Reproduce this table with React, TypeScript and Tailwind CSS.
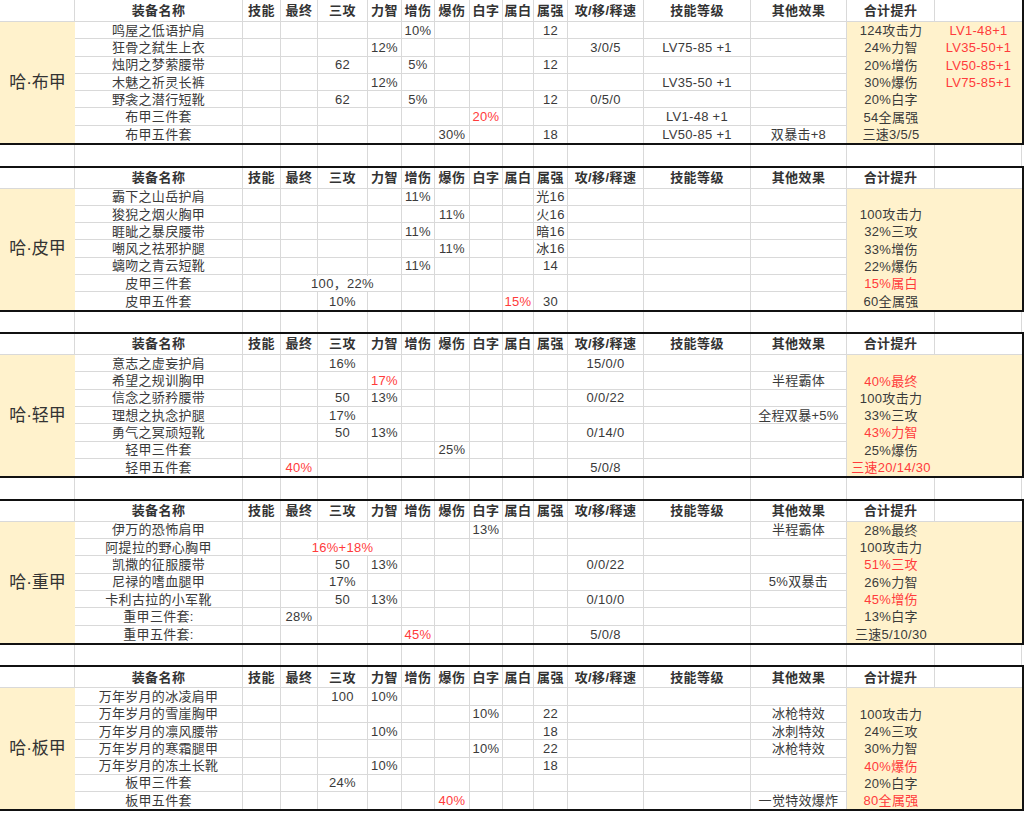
import React from "react";

const COLS =
  "grid-cols-[75px_168px_38px_37px_50px_34px_33px_35px_33px_31px_34px_76px_107px_96px_88px_87px]";

const HEADERS = [
  "装备名称",
  "技能",
  "最终",
  "三攻",
  "力智",
  "增伤",
  "爆伤",
  "白字",
  "属白",
  "属强",
  "攻/移/释速",
  "技能等级",
  "其他效果",
  "合计提升",
  "",
];

type Row = { name: string; c: Record<number, string> };

const r = (name: string, c: Record<number, string>): Row => ({ name, c });

// 1 技能, 2 最终, 3 三攻, 4 力智, 5 增伤, 6 爆伤, 7 白字, 8 属白, 9 属强,
// 10 攻/移/释速, 11 技能等级, 12 其他效果, 13 合计提升, 14 extra. "!" = red
const BLOCKS: { title: string; rows: Row[] }[] = [
  {
    title: "哈·布甲",
    rows: [
      r("鸣屋之低语护肩", { 5: "10%", 9: "12", 13: "124攻击力", 14: "!LV1-48+1" }),
      r("狂骨之弑生上衣", { 4: "12%", 10: "3/0/5", 11: "LV75-85 +1", 13: "24%力智", 14: "!LV35-50+1" }),
      r("烛阴之梦萦腰带", { 3: "62", 5: "5%", 9: "12", 13: "20%增伤", 14: "!LV50-85+1" }),
      r("木魅之祈灵长裤", { 4: "12%", 11: "LV35-50 +1", 13: "30%爆伤", 14: "!LV75-85+1" }),
      r("野衾之潜行短靴", { 3: "62", 5: "5%", 9: "12", 10: "0/5/0", 13: "20%白字" }),
      r("布甲三件套", { 7: "!20%", 11: "LV1-48 +1", 13: "54全属强" }),
      r("布甲五件套", { 6: "30%", 9: "18", 11: "LV50-85 +1", 12: "双暴击+8", 13: "三速3/5/5" }),
    ],
  },
  {
    title: "哈·皮甲",
    rows: [
      r("霸下之山岳护肩", { 5: "11%", 9: "光16" }),
      r("狻猊之烟火胸甲", { 6: "11%", 9: "火16", 13: "100攻击力" }),
      r("睚眦之暴戾腰带", { 5: "11%", 9: "暗16", 13: "32%三攻" }),
      r("嘲风之祛邪护腿", { 6: "11%", 9: "冰16", 13: "33%增伤" }),
      r("螭吻之青云短靴", { 5: "11%", 9: "14", 13: "22%爆伤" }),
      r("皮甲三件套", { 3: "100，22%", 13: "!15%属白" }),
      r("皮甲五件套", { 3: "10%", 8: "!15%", 9: "30", 13: "60全属强" }),
    ],
  },
  {
    title: "哈·轻甲",
    rows: [
      r("意志之虚妄护肩", { 3: "16%", 10: "15/0/0" }),
      r("希望之规训胸甲", { 4: "!17%", 12: "半程霸体", 13: "!40%最终" }),
      r("信念之骄矜腰带", { 3: "50", 4: "13%", 10: "0/0/22", 13: "100攻击力" }),
      r("理想之执念护腿", { 3: "17%", 12: "全程双暴+5%", 13: "33%三攻" }),
      r("勇气之冥顽短靴", { 3: "50", 4: "13%", 10: "0/14/0", 13: "!43%力智" }),
      r("轻甲三件套", { 6: "25%", 13: "25%爆伤" }),
      r("轻甲五件套", { 2: "!40%", 10: "5/0/8", 13: "!三速20/14/30" }),
    ],
  },
  {
    title: "哈·重甲",
    rows: [
      r("伊万的恐怖肩甲", { 7: "13%", 12: "半程霸体", 13: "28%最终" }),
      r("阿提拉的野心胸甲", { 3: "!16%+18%", 13: "100攻击力" }),
      r("凯撒的征服腰带", { 3: "50", 4: "13%", 10: "0/0/22", 13: "!51%三攻" }),
      r("尼禄的嗜血腿甲", { 3: "17%", 12: "5%双暴击", 13: "26%力智" }),
      r("卡利古拉的小军靴", { 3: "50", 4: "13%", 10: "0/10/0", 13: "!45%增伤" }),
      r("重甲三件套:", { 2: "28%", 13: "13%白字" }),
      r("重甲五件套:", { 5: "!45%", 10: "5/0/8", 13: "三速5/10/30" }),
    ],
  },
  {
    title: "哈·板甲",
    rows: [
      r("万年岁月的冰凌肩甲", { 3: "100", 4: "10%" }),
      r("万年岁月的雪崖胸甲", { 7: "10%", 9: "22", 12: "冰枪特效", 13: "100攻击力" }),
      r("万年岁月的凛风腰带", { 4: "10%", 9: "18", 12: "冰刺特效", 13: "24%三攻" }),
      r("万年岁月的寒霜腿甲", { 7: "10%", 9: "22", 12: "冰枪特效", 13: "30%力智" }),
      r("万年岁月的冻土长靴", { 4: "10%", 9: "18", 13: "!40%爆伤" }),
      r("板甲三件套", { 3: "24%", 13: "20%白字" }),
      r("板甲五件套", { 6: "!40%", 12: "一觉特效爆炸", 13: "!80全属强" }),
    ],
  },
];

function Cell({ text, yellow, last }: { text?: string; yellow: boolean; last: boolean }) {
  const red = text?.startsWith("!");
  const value = red ? text!.slice(1) : text;
  const box = yellow
    ? "bg-[#fff2cc]"
    : last
      ? "bg-white border-r border-[#d9d9d9]"
      : "bg-white border-r border-b border-[#d9d9d9]";
  return (
    <div className={`flex items-center justify-center whitespace-nowrap ${box}`}>
      {value && (
        <span
          className={`relative z-10 leading-[15px] tracking-[0.3px] ${
            yellow ? "bg-[#fff2cc]" : "bg-white"
          } ${red ? "text-[#ff3b3b]" : "text-[#3a3a3a]"}`}
        >
          {value}
        </span>
      )}
    </div>
  );
}

function Block({ title, rows, first }: { title: string; rows: Row[]; first: boolean }) {
  return (
    <div
      className={`grid ${COLS} w-[1024px] border-r-2 border-b-2 border-[#111111] ${
        first ? "grid-rows-[22px_repeat(7,17.3px)]" : "border-t-2 grid-rows-[21px_repeat(7,17.3px)]"
      }`}
    >
      <div className="border-r border-b border-[#d9d9d9]" />
      {HEADERS.map((h, i) => (
        <div
          key={i}
          className={`flex items-center justify-center whitespace-nowrap font-bold text-[#333333] tracking-[0.4px] border-b border-[#d9d9d9] ${
            i < 14 ? "border-r" : ""
          }`}
        >
          {h}
        </div>
      ))}
      <div className="row-span-7 bg-[#fff2cc] flex items-center justify-center text-[17px] text-[#333333]">
        {title}
      </div>
      {rows.map((row, ri) => {
        const last = ri === rows.length - 1;
        return (
          <React.Fragment key={ri}>
            <Cell text={row.name} yellow={false} last={last} />
            {Array.from({ length: 14 }, (_, k) => k + 1).map((k) => (
              <Cell key={k} text={row.c[k]} yellow={k >= 13} last={last} />
            ))}
          </React.Fragment>
        );
      })}
    </div>
  );
}

function Spacer() {
  return (
    <div className={`grid ${COLS} w-[1024px] h-[20.5px] pr-[2px]`}>
      {Array.from({ length: 16 }, (_, i) => (
        <div key={i} className="border-r border-[#d9d9d9]" />
      ))}
    </div>
  );
}

export default function App() {
  return (
    <div className="w-[1024px] h-[814px] overflow-hidden bg-white text-[13px] font-['Liberation_Sans','Noto_Sans_CJK_SC',sans-serif]">
      {BLOCKS.map((b, i) => (
        <React.Fragment key={i}>
          <Block title={b.title} rows={b.rows} first={i === 0} />
          {i < BLOCKS.length - 1 && <Spacer />}
        </React.Fragment>
      ))}
    </div>
  );
}
